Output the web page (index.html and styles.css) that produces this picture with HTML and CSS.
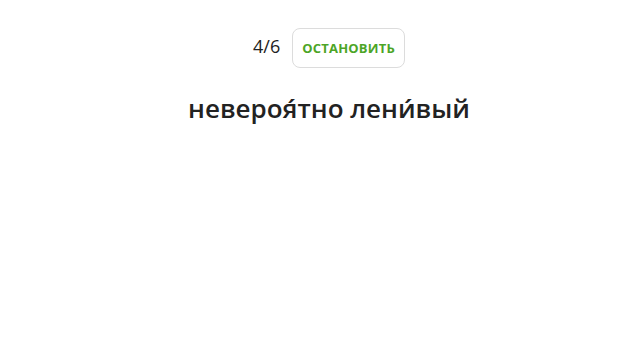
FILE: index.html
```html
<!DOCTYPE html>
<html lang="ru">
<head>
<meta charset="utf-8">
<link rel="stylesheet" href="styles.css">
</head>
<body>
<div class="page">
  <div class="top">
    <span class="counter">4/6</span>
    <button class="stop">ОСТАНОВИТЬ</button>
  </div>
  <h1 class="word">невероя́тно лени́вый</h1>
</div>
</body>
</html>
```
FILE: styles.css
```css
html, body { margin: 0; padding: 0; background: #fff; }
.page {
  width: 640px; height: 360px;
  display: flex; flex-direction: column; align-items: center;
  padding-left: 18px; box-sizing: border-box;
  font-family: "Open Sans", "Noto Sans", sans-serif;
}
.top {
  display: flex; align-items: center; gap: 12px;
  margin-top: 28px;
  height: 40px;
}
.counter {
  font-size: 18px; color: #222; position: relative; top: -2px;
}
.stop {
  height: 40px; padding: 0 9px;
  border: 1px solid #dcdcdc; border-radius: 8px; background: #fff;
  color: #4ca526; font-family: "Open Sans", "Noto Sans", sans-serif;
  font-weight: 700; font-size: 13px; letter-spacing: 0.2px;
}
.word {
  margin: 22px 0 0 0;
  font-size: 26px; font-weight: 600; color: #222;
  line-height: 36px;
}
```
